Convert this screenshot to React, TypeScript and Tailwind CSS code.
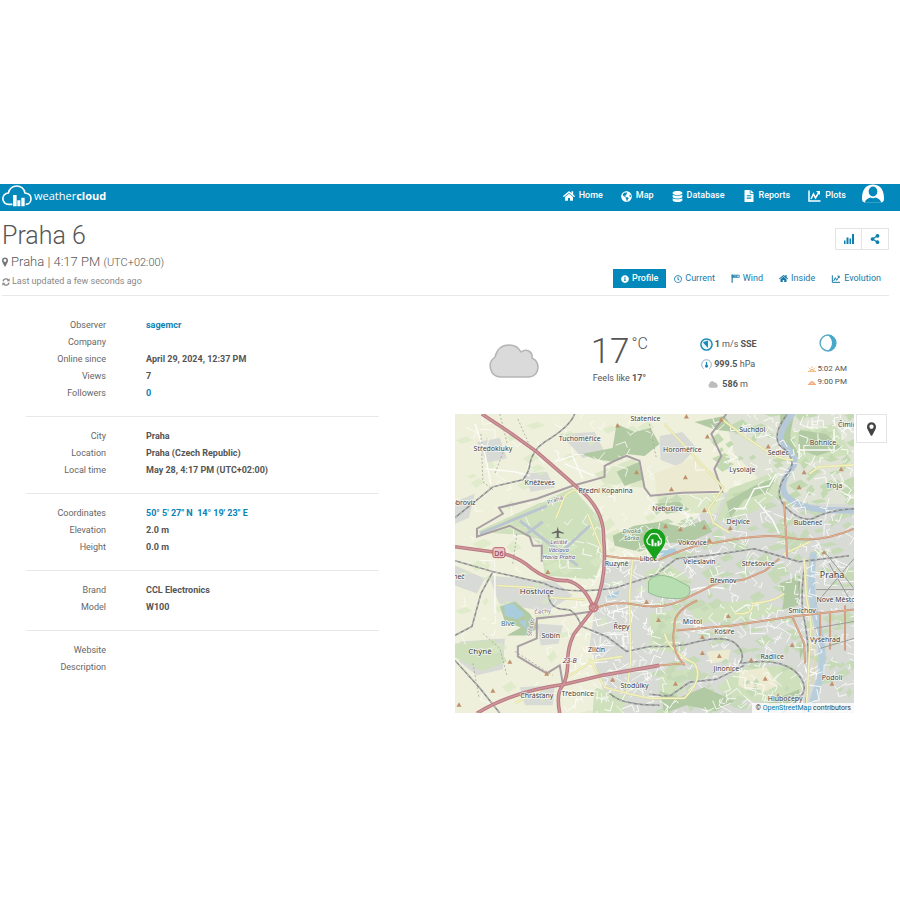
import type { ReactNode } from "react";
import {
  FaDatabase,
  FaFileAlt,
  FaGlobeAmericas,
  FaHome,
  FaInfoCircle,
  FaRegClock,
  FaShareAlt,
} from "react-icons/fa";

interface Row {
  label: string;
  value?: string;
  link?: boolean;
}

const sections: Row[][] = [
  [
    { label: "Observer", value: "sagemcr", link: true },
    { label: "Company" },
    { label: "Online since", value: "April 29, 2024, 12:37 PM" },
    { label: "Views", value: "7" },
    { label: "Followers", value: "0", link: true },
  ],
  [
    { label: "City", value: "Praha" },
    { label: "Location", value: "Praha (Czech Republic)" },
    { label: "Local time", value: "May 28, 4:17 PM (UTC+02:00)" },
  ],
  [
    { label: "Coordinates", value: "50° 5' 27\" N \u00a014° 19' 23\" E", link: true },
    { label: "Elevation", value: "2.0 m" },
    { label: "Height", value: "0.0 m" },
  ],
  [
    { label: "Brand", value: "CCL Electronics" },
    { label: "Model", value: "W100" },
  ],
  [{ label: "Website" }, { label: "Description" }],
];

function PlotIcon({ className }: { className: string }) {
  return (
    <svg viewBox="0 0 26 24" className={className} fill="none" stroke="currentColor" strokeWidth="3">
      <path d="M2 1v21h23" />
      <path d="M6 18l5-10 4 8 6-10" />
      <path d="M16 2h8v8z" fill="currentColor" stroke="none" />
    </svg>
  );
}

function WindIcon({ className }: { className: string }) {
  return (
    <svg viewBox="0 0 24 24" className={className} fill="none" stroke="currentColor">
      <path d="M3 1v22" strokeWidth="3" />
      <path d="M3 3h19v6H3zM10 3v6M16 3v6" strokeWidth="2" />
      <path d="M5 4h4v4H5zM12 4h3v4h-3z" fill="currentColor" stroke="none" />
    </svg>
  );
}

function BarsIcon() {
  return (
    <svg viewBox="0 0 20 20" className="size-[10px]" fill="currentColor">
      <path d="M0 13h3v7H0zM5 7h4v13H5zM11 9h3v11h-3zM16 0h4v20h-4z" />
    </svg>
  );
}

function PinIcon({ className }: { className: string }) {
  return (
    <svg viewBox="0 0 16 24" className={className} fill="currentColor">
      <path
        fillRule="evenodd"
        d="M8 0a8 8 0 0 0-8 8c0 2 .4 3 1 4.500l5.500 10.500a1.700 1.700 0 0 0 3 0L15 12.500c.6-1.500 1-2.500 1-4.500a8 8 0 0 0-8-8zm0 4.200a3.800 3.800 0 1 1 0 7.600 3.800 3.800 0 0 1 0-7.600z"
      />
    </svg>
  );
}

function RefreshIcon() {
  return (
    <svg viewBox="0 0 24 24" className="size-2" fill="none" stroke="currentColor" strokeWidth="4">
      <path d="M3 10a9 9 0 0 1 16-4M21 14a9 9 0 0 1-16 4" />
      <path d="M23 1v9h-9zM1 23v-9h9z" fill="currentColor" stroke="none" />
    </svg>
  );
}

function CloudLogo() {
  return (
    <svg viewBox="0 0 90 66" className="h-[22px] w-[30px]" fill="none">
      <path
        d="M31 58H20A17 17 0 0 1 19 24C23 10 32 3 44 3c13 0 22 8 25 21 11 1 18 8 18 17 0 10-7 17-16 17"
        stroke="white"
        strokeWidth="5"
      />
      <path d="M33 30h11v34H33zM46 46h9v18h-9zM58 38h10v26H58z" fill="white" />
    </svg>
  );
}

const navItems: { label: string; icon: ReactNode }[] = [
  { label: "Home", icon: <FaHome className="size-3" /> },
  { label: "Map", icon: <FaGlobeAmericas className="size-[11px]" /> },
  { label: "Database", icon: <FaDatabase className="size-[11px]" /> },
  { label: "Reports", icon: <FaFileAlt className="size-3" /> },
  { label: "Plots", icon: <PlotIcon className="h-3 w-[13px]" /> },
];

function Header() {
  return (
    <header className="flex h-[27px] items-start justify-between bg-[#0288bb] pl-[2px] pr-4 text-white">
      <a href="#" className="flex items-center gap-[2px] pt-[1px]">
        <CloudLogo />
        <span className="font-['Open_Sans',sans-serif] text-[11px] leading-[22px]">
          weather<b>cloud</b>
        </span>
      </a>
      <div className="flex items-start gap-4">
        <nav className="flex items-start gap-[18px]">
          {navItems.map((item) => (
            <a key={item.label} href="#" className="flex h-6 items-center gap-1 text-[9px] font-medium">
              {item.icon}
              {item.label}
            </a>
          ))}
        </nav>
        <a href="#" aria-label="Account">
          <svg viewBox="0 0 66 56" className="h-[19px] w-[22px]">
            <path d="M2 52C-1 46 0 38 1 31C4 12 16 1 33 1s29 11 32 30c1 7 2 15-1 21L57 56H9z" fill="white" />
            <ellipse cx="33" cy="22" rx="13" ry="15" fill="#0288bb" />
            <path d="M8 56C10 47 18 42 25 40Q33 45 41 40C48 42 56 47 58 56z" fill="#0288bb" />
          </svg>
        </a>
      </div>
    </header>
  );
}

const tabs: { label: string; icon: ReactNode }[] = [
  { label: "Profile", icon: <FaInfoCircle className="size-2" /> },
  { label: "Current", icon: <FaRegClock className="size-2" /> },
  { label: "Wind", icon: <WindIcon className="size-[9px]" /> },
  { label: "Inside", icon: <FaHome className="size-[9px]" /> },
  { label: "Evolution", icon: <PlotIcon className="h-2 w-[10px]" /> },
];

function StationBar() {
  return (
    <div className="ml-[2px] mr-[11px] flex justify-between border-b border-[#e8e8e8] pb-[3px] pt-[9px]">
      <div>
        <h1 className="text-[25px] font-light leading-8 text-[#555]">Praha 6</h1>
        <p className="flex h-5 items-center gap-[3px] text-[13px] font-light text-[#555]">
          <PinIcon className="h-[10px] w-[6px] text-[#777]" />
          <span>
            Praha | 4:17 PM <span className="text-[11px]">(UTC+02:00)</span>
          </span>
        </p>
        <p className="flex h-5 items-center gap-[2px] text-[9px] text-[#888]">
          <RefreshIcon />
          Last updated a few seconds ago
        </p>
      </div>
      <div className="flex flex-col items-end justify-between pb-1 pt-2">
        <div className="flex border border-[#e4e4e4] text-[#0b7fb0]">
          <button aria-label="Statistics" className="flex h-[20px] w-[26px] items-center justify-center border-r border-[#e4e4e4]">
            <BarsIcon />
          </button>
          <button aria-label="Share" className="flex h-[20px] w-[26px] items-center justify-center">
            <FaShareAlt className="size-[10px]" />
          </button>
        </div>
        <nav className="flex">
          {tabs.map((tab, i) => (
            <a
              key={tab.label}
              href="#"
              className={
                "flex h-[19px] items-center gap-[3px] px-2 text-[9px] " +
                (i === 0 ? "bg-[#0288bb] font-medium text-white" : "text-[#1679a8]")
              }
            >
              {tab.icon}
              {tab.label}
            </a>
          ))}
        </nav>
      </div>
    </div>
  );
}

function Details() {
  return (
    <div className="pt-[10px] text-[9px] leading-[17px]">
      {sections.map((rows, i) => (
        <dl key={i} className={i > 0 ? "border-t border-[#e8e8e8] pb-[14px] pt-[11px]" : "pb-[14px] pt-[11px]"}>
          {rows.map((row) => (
            <div key={row.label} className="flex gap-10">
              <dt className="w-20 text-right text-[#666]">{row.label}</dt>
              <dd className="font-bold text-[#555]">
                {row.link ? (
                  <a href="#" className="text-[#0b82b5]">
                    {row.value}
                  </a>
                ) : (
                  row.value
                )}
              </dd>
            </div>
          ))}
        </dl>
      ))}
    </div>
  );
}

const cloudPath = "M12 33A11 11 0 0 1 7 13C9 5 14 1 21 1c6 0 10 3 12 7 6-4 12 0 11 6 4 2 6 5 6 9 0 6-4 10-10 10z";

function Conditions() {
  return (
    <div className="flex h-[118px] justify-between pl-[33px] pr-[40px] pt-[38px] text-[#555]">
      <svg viewBox="0 0 51 34" className="mt-[10px] h-[34px] w-[51px]">
        <path d={cloudPath} fill="#dadada" stroke="#b5b5b5" strokeWidth="1.500" />
      </svg>
      <div className="text-center">
        <div className="flex items-start justify-center gap-[2px] font-light">
          <span className="text-[35px] leading-9">17</span>
          <span className="text-[16px] leading-5">°C</span>
        </div>
        <p className="text-[9px] leading-4">
          Feels like <b>17°</b>
        </p>
      </div>
      <div className="flex flex-col items-center text-[9px] leading-5">
        <p className="flex items-center gap-[2px]">
          <svg viewBox="0 0 36 36" className="size-[13px]">
            <circle cx="18" cy="18" r="15.500" fill="#eaf6fb" stroke="#1688b5" strokeWidth="4" />
            <path d="M8 12L22 7V28z" fill="#1688b5" />
          </svg>
          <span>
            <b>1</b> m/s <b>SSE</b>
          </span>
        </p>
        <p className="flex items-center gap-[2px]">
          <svg viewBox="0 0 34 34" className="size-[11px]" fill="none">
            <path d="M9 30A15 15 0 1 1 25 30" stroke="#8ba8c4" strokeWidth="3" />
            <path d="M17 9v10" stroke="#1688b5" strokeWidth="4" />
            <circle cx="17" cy="22" r="5" fill="#1688b5" />
          </svg>
          <span>
            <b>999.5</b> hPa
          </span>
        </p>
        <p className="flex items-center gap-1">
          <svg viewBox="0 0 51 34" className="h-[7px] w-[10px]">
            <path d={cloudPath} fill="#bcbcbc" />
          </svg>
          <span>
            <b>586</b> m
          </span>
        </p>
      </div>
      <div className="flex flex-col items-center text-[8px] leading-[13px]">
        <svg viewBox="0 0 50 50" className="mb-[10px] size-[18px]">
          <circle cx="25" cy="25" r="22" fill="white" stroke="#5aa9c6" strokeWidth="4" />
          <path d="M24 2a23 23 0 0 1 0 46c9-8 12-16 12-23S33 10 24 2z" fill="#45a9ce" />
        </svg>
        <p className="flex items-center gap-[1px]">
          <svg viewBox="0 0 24 18" className="h-[6px] w-2" fill="#fbe3c5" stroke="#f5b673" strokeWidth="3">
            <path d="M0 16h24M6 16a6 6 0 0 1 12 0M12 1v5M3 5l4 4M21 5l-4 4" />
          </svg>
          5:02 AM
        </p>
        <p className="flex items-center gap-[1px]">
          <svg viewBox="0 0 24 18" className="h-[6px] w-2" fill="#fbd9c0" stroke="#f0975c" strokeWidth="3">
            <path d="M0 16h24M5 15a7 7 0 0 1 14 0" />
          </svg>
          9:00 PM
        </p>
      </div>
    </div>
  );
}

// [name, x, y, font size] in map units, text centred on x
const places: [string, number, number, number][] = [
  ["Statenice", 191, 7, 7],
  ["Středokluky", 38, 37, 7],
  ["Tuchoměřice", 125, 27, 7],
  ["Kněževes", 85, 71, 7],
  ["Přední Kopanina", 151, 79, 7],
  ["Dobrovíz", 6, 91, 7],
  ["Nebušice", 213, 97, 7],
  ["Horoměřice", 228, 38, 7],
  ["Suchdol", 298, 18, 7],
  ["Čimice", 395, 13, 7],
  ["Bohnice", 369, 31, 7],
  ["Sedlec", 324, 41, 7],
  ["Lysolaje", 288, 58, 7],
  ["Troja", 380, 74, 7],
  ["Dejvice", 284, 110, 7],
  ["Bubeneč", 354, 111, 7],
  ["Vokovice", 238, 131, 7],
  ["Veleslavín", 245, 150, 7],
  ["Střešovice", 304, 152, 7],
  ["Ruzyně", 162, 152, 7],
  ["Liboc", 194, 147, 7],
  ["Jeneč", 1, 165, 7],
  ["Hostivice", 82, 180, 8],
  ["Břevnov", 269, 169, 7],
  ["Praha", 378, 164, 9],
  ["Nové Město", 382, 188, 7],
  ["Smíchov", 348, 199, 7],
  ["Motol", 238, 211, 7],
  ["Košíře", 270, 221, 7],
  ["Řepy", 167, 216, 7],
  ["Sobín", 96, 225, 7],
  ["Chýně", 25, 241, 8],
  ["Zličín", 142, 239, 7],
  ["Vyšehrad", 371, 229, 7],
  ["Radlice", 318, 246, 7],
  ["Jinonice", 272, 258, 7],
  ["Podolí", 378, 267, 7],
  ["Stodůlky", 180, 275, 7],
  ["Chrášťany", 82, 285, 7],
  ["Třebonice", 123, 283, 7],
  ["Hlubočepy", 331, 288, 7],
];

const peaks = [
  [163, 11], [232, 2], [267, 5], [253, 22], [231, 63], [217, 75], [182, 58],
  [314, 32], [350, 58], [387, 55], [345, 73], [250, 96], [211, 112], [226, 115], [250, 113],
  [255, 126], [276, 114], [370, 138], [204, 206], [93, 158], [192, 188], [248, 223],
  [274, 202], [248, 239], [265, 242], [297, 246], [338, 231], [311, 265], [55, 248],
  [92, 260], [38, 277], [4, 291], [158, 266], [221, 270], [378, 270], [324, 282],
];

// Small deterministic generator so the street texture is stable between renders
function makeRandom(seed: number) {
  let s = seed;
  return () => {
    s = (s * 16807) % 2147483647;
    return s / 2147483647;
  };
}

function scatterStreets(seed: number, count: number, x: number, y: number, w: number, h: number) {
  const rnd = makeRandom(seed);
  let d = "";
  for (let i = 0; i < count; i++) {
    const px = x + rnd() * w;
    const py = y + rnd() * h;
    const a = rnd() * 6.3;
    const len = 5 + rnd() * 12;
    const dx = Math.cos(a) * len;
    const dy = Math.sin(a) * len * 0.7;
    d += `M${px.toFixed(1)} ${py.toFixed(1)}l${dx.toFixed(1)} ${dy.toFixed(1)}l${(-dy * 0.6).toFixed(1)} ${(dx * 0.6).toFixed(1)}`;
  }
  return d;
}

function scatterParks(seed: number, count: number, x: number, y: number, w: number, h: number) {
  const rnd = makeRandom(seed);
  let d = "";
  for (let i = 0; i < count; i++) {
    const px = x + rnd() * w;
    const py = y + rnd() * h;
    const a = 3 + rnd() * 10;
    const b = 2 + rnd() * 5;
    d += `M${px.toFixed(1)} ${py.toFixed(1)}l${a.toFixed(1)} ${(-b).toFixed(1)}l${(a * 0.6).toFixed(1)} ${b.toFixed(1)}l${(-a).toFixed(1)} ${b.toFixed(1)}z`;
  }
  return d;
}

const cityStreets = scatterStreets(17, 330, 190, 80, 210, 220);
const northStreets = scatterStreets(43, 70, 255, 0, 145, 85);
const suburbStreets = scatterStreets(91, 100, 120, 140, 80, 160);
const countryRoads = scatterStreets(7, 110, 0, 0, 200, 300);
const parks = scatterParks(29, 190, 195, 85, 200, 215);
const northParks = scatterParks(63, 55, 255, 0, 140, 90);
const westParks = scatterParks(5, 70, 0, 0, 200, 300);

const motorways =
  "M27 0L57 20L82 38Q105 58 122 73Q150 95 149 125Q153 165 139 195L119 221Q112 236 113 252Q112 266 108 272Q101 280 105 300" +
  "M0 133L44 139Q62 142 77 155Q94 168 112 167Q130 171 139 195M22 300Q58 278 110 271L148 262L205 252";

const mainRoads =
  "M150 142L165 144L205 146Q240 130 260 129Q310 119 335 124Q366 130 400 115" +
  "M139 195Q160 187 180 191Q210 197 233 184L262 170L290 166L311 157L325 145" +
  "M205 252L230 250M222 217L278 212L338 203L400 196M243 187Q218 198 220 214Q215 235 230 252M330 88L333 144M366 198v28M376 198v38M391 192v45M338 203L350 230L351 250";

const secondaryRoads =
  "M267 5Q292 24 312 37Q325 46 339 46M210 10L269 74L254 95L259 109L275 119M122 76Q110 78 107 90L101 105M133 100L150 143" +
  "M355 60L365 53L400 51M95 184L130 186M178 145L175 180L176 250L172 280L195 285L230 285Q250 265 240 250Q215 238 210 220" +
  "M280 200Q300 202 298 190Q320 188 330 180M350 145L352 182L357 210L352 300M135 245L150 274L172 280M110 265L140 247L168 243M42 172L80 174M60 290L88 276M356 128L330 140";

const railways =
  "M0 104L38 73L68 66Q75 57 75 50Q78 36 90 28Q115 13 120 0M0 147L38 158L90 170Q110 182 162 174L205 160" +
  "M38 158L26 180L17 213L0 222M0 247L25 275L45 300M94 177Q92 196 112 196Q120 196 127 213L152 223L172 238L195 233L215 233L232 231Q270 220 281 230Q292 240 286 250Q322 244 340 257Q358 274 344 286L328 300" +
  "M195 281L215 283L235 269L262 266L290 252M333 0Q318 20 325 31Q344 45 335 58Q318 76 330 92Q345 108 358 105Q375 96 400 95M205 158L222 145L260 141L300 135L345 148L395 142M155 280Q166 292 205 292M350 155Q346 188 350 205Q357 240 353 280L350 300";

const boundaries =
  "M87 148V132H78L75 123L55 112L22 123V115L48 100L44 94L82 85L118 72L150 63L150 52L160 47L172 42L185 47L190 74L196 82L228 79L268 78L260 55L267 42L257 20L272 0" +
  "M137 198L110 202L82 205L82 225L63 233V243L78 252L92 260L105 252L108 270";

function StationMap() {
  return (
    <div className="relative min-w-0 flex-1">
      <svg viewBox="0 0 400 300" className="block w-full" role="img" aria-label="Station location map">
        <rect width="400" height="300" fill="#eff0db" />
        {/* built-up areas */}
        <g fill="#d8dad6">
          <path d="M195 146L268 80L325 60L400 85V300H170L150 282L135 232L140 196L152 150z" />
          <path d="M270 0H400V90H325L300 60L280 40z" fill="#dfe3d5" />
          <path d="M22 28L45 24L52 44L32 49zM105 20L140 18L150 38L128 44zM68 60L92 58L100 74L76 78z" />
          <path d="M205 22L228 18L242 34L224 53L206 46z" />
          <path d="M34 162L100 168L118 182L92 198L44 190zM82 210L108 212L104 230L86 232zM5 228L50 225L48 256L22 262L4 248z" />
          <path d="M0 88L20 80L14 104L0 110zM0 152L30 165L22 180L0 172zM65 274L100 272L98 292L70 292zM85 100L120 86L135 108L100 125z" />
        </g>
        {/* grass and fields */}
        <g fill="#cfe0bd">
          <path d="M22 118L118 74L145 105L148 145L140 166L90 162L86 132L75 122z" />
          <path d="M140 60L180 44L190 74L150 70zM202 82L270 80L262 100L205 98z" fill="#dbe7c6" />
          <path d="M275 75L322 58L326 80L300 98L262 108zM330 18L380 10L398 40L345 50z" />
          <path d="M285 255L338 252L350 275L330 292L278 285L262 275zM190 158L215 150L238 168L224 182L192 176z" />
          <path d="M195 200L225 196L222 240L196 235zM236 192L300 186L330 196L300 206L240 210zM205 258L235 256L228 280L205 282z" />
          <path d="M140 274L172 284L168 300H138zM0 230L40 226L52 248L28 258L0 244z" />
        </g>
        <g fill="#ecebd2">
          <path d="M285 258L312 254L324 272L302 282L284 272zM252 238L276 236L274 247L256 250zM200 60L240 44L262 60L264 76L202 80z" />
        </g>
        <path d={westParks} fill="#d8e8c4" opacity="0.7" />
        <path d={parks} fill="#c6dab8" />
        <path d={northParks} fill="#c3d9b2" />
        {/* forests */}
        <g fill="#b2caa3">
          <path d="M127 40L158 34L162 10L180 18L196 14L205 30L190 42L172 40L160 48L140 45z" />
          <path d="M162 58L184 48L188 66L170 72z" />
          <path d="M158 122L180 112L205 108L230 114L250 106L258 118L236 128L205 130L185 138L160 132z" />
          <path d="M272 88L300 72L322 64L314 78L290 86L276 104zM326 0L340 0L336 22L346 44L336 40L326 24z" />
          <path d="M345 16L372 20L388 34L362 42L344 34zM240 8L270 2L282 18L262 16zM200 90L225 88L235 96L212 100z" />
          <path d="M45 193L60 188L75 200L84 214L72 222L52 222L66 214L50 208z" />
          <path d="M325 170L346 162L344 192L328 196L330 184zM205 278L225 284L250 274L280 288L262 298L232 292L210 300z" />
          <path d="M312 290L345 276L346 284L322 298z" />
          <path d="M195 166L200 160L205 180L197 178zM345 230L350 236L346 246z" />
        </g>
        {/* water */}
        <g fill="none" stroke="#b5c9d8" strokeLinecap="round">
          <path d="M338 0Q322 22 328 30Q346 44 338 54Q322 72 334 84Q345 94 368 96L400 97" strokeWidth="6" />
          <path d="M359 142Q355 175 361 200Q372 240 366 265L355 300" strokeWidth="7" stroke="#b9cedb" />
          <path d="M354 145Q350 180 356 208Q364 240 358 270" strokeWidth="2" stroke="#ddd9b4" />
        </g>
        <path d="M49 192L58 190L70 201L62 206L50 202zM64 208L71 206L72 216zM205 138L220 134L224 140L208 143zM150 184L165 177L162 184z" fill="#a9cddd" />
        {/* streets */}
        <g fill="none" stroke="#fbfbf8">
          <path d={cityStreets} strokeWidth="1" opacity="0.9" />
          <path d={northStreets} strokeWidth="1" />
          <path d={suburbStreets} strokeWidth="1" />
          <path d={countryRoads} strokeWidth="1" opacity="0.8" />
          <path
            d="M290 95L300 75L315 72L322 60M290 95L280 95M345 36H380V15M345 45L345 30M305 90L318 106L325 120M100 48L118 42L128 65M30 55L60 58L75 62M20 10L30 40L36 70M110 50L140 62M225 180Q250 170 270 175M40 160V200"
            strokeWidth="1.500"
          />
        </g>
        <path d="M194 168Q200 158 218 164L235 173Q238 184 226 185Q206 186 194 179z" fill="#b7deb0" stroke="#93bd90" strokeWidth="1" />
        <path
          d="M26 20L28 68L38 76M45 0L52 28L40 60M63 5L74 30M28 220L45 235L52 262M60 238L98 262M58 150L62 120M18 250L24 284M195 10L202 45"
          fill="none"
          stroke="#a5a59a"
          strokeWidth="0.800"
          strokeDasharray="2 2"
        />
        <path d="M25 120L92 92M65 107L123 152M72 120L88 108M105 140L135 112" stroke="#bbc5cd" strokeWidth="3" fill="none" />
        <path d={boundaries} fill="none" stroke="#a79da3" strokeWidth="2" />
        <path d={railways} fill="none" stroke="#858788" strokeWidth="1.500" />
        <path d={railways} fill="none" stroke="#dcdcdc" strokeWidth="0.700" strokeDasharray="3 3" />
        <path d={secondaryRoads} fill="none" stroke="#cfcf9c" strokeWidth="2.200" />
        <path d={secondaryRoads} fill="none" stroke="#f4f2bd" strokeWidth="1.600" />
        <path d={mainRoads} fill="none" stroke="#c69174" strokeWidth="2" />
        <path d={mainRoads} fill="none" stroke="#e0b294" strokeWidth="1" />
        <path d={motorways} fill="none" stroke="#b87980" strokeWidth="3.600" />
        <path d={motorways} fill="none" stroke="#cf959b" strokeWidth="1.600" />
        <circle cx="139" cy="194" r="4" fill="none" stroke="#c77a80" strokeWidth="2" />
        <path d="M345 168v18M372 140L400 175M400 145L362 190M375 150L398 190M362 176H400M360 215L400 208M366 235L400 225" stroke="#9c9c98" fill="none" />
        <g fill="#c0906a">
          {peaks.map(([x, y]) => (
            <path key={`${x}-${y}`} d={`M${x} ${y - 2}l2.500 4.500h-5z`} />
          ))}
        </g>
        <rect x="38" y="134" width="12" height="10" rx="2" fill="#ecc5c8" stroke="#b7606b" />
        <path d="M103 113l1 4l5 2v1l-5-1v4l2 1h-6l2-1v-4l-5 1v-1l5-2z" fill="#666" />
        <g
          fontFamily="'Noto Sans', sans-serif"
          textAnchor="middle"
          stroke="#ffffff"
          strokeOpacity="0.7"
          strokeWidth="1.500"
          paintOrder="stroke"
          fill="#3d3d3d"
        >
          {places.map(([name, x, y, size]) => (
            <text key={name} x={x} y={y} fontSize={size}>
              {name}
            </text>
          ))}
          <text x="44" y="142" fontSize="7" fill="#803040" strokeWidth="0">D6</text>
          <text x="115" y="250" fontSize="7" fontStyle="italic" fill="#803040">23-B</text>
          <text x="53" y="213" fontSize="7" fill="#3f6f75">Blve</text>
          <g fontSize="6" fontStyle="italic" fill="#5f5c8c">
            <text x="104" y="130">Letiště</text>
            <text x="104" y="138">Václava</text>
            <text x="104" y="145">Havla Praha</text>
          </g>
          <g fontSize="6" fontStyle="italic" fill="#5b7a60">
            <text x="177" y="119">Divoká</text>
            <text x="177" y="126">Šárka</text>
          </g>
          <g fontSize="6" fill="#85778a">
            <text transform="translate(101 88) rotate(-20)">Praha</text>
            <text transform="translate(88 200) rotate(-5)">Čechy</text>
            <text transform="translate(78 214) rotate(-80)">Středo</text>
          </g>
        </g>
        {/* station marker */}
        <g transform="translate(200 115)">
          <path d="M0 32C-3 24-11 19-11 11A11 11 0 0 1 11 11C11 19 3 24 0 32z" fill="#18a21c" />
          <path d="M-4 16H-5A4 4 0 0 1-6 9Q-4 4 0 5Q4 5 5 9A4 4 0 0 1 5 16" fill="none" stroke="white" strokeWidth="1.300" />
          <path d="M-3 10.500h2v7h-2zM0 14h2v3.500h-2zM3 12h2v5.500h-2z" fill="white" />
        </g>
      </svg>
      <p className="absolute bottom-0 right-0 bg-white/80 px-[3px] text-[7px] leading-[10px] text-[#333]">
        © <a href="#" className="text-[#0078a8]">OpenStreetMap</a> contributors
      </p>
    </div>
  );
}

export default function App() {
  return (
    <div className="min-h-screen bg-white pt-46 font-[Roboto,sans-serif]">
      <Header />
      <StationBar />
      <main className="grid grid-cols-[353fr_432fr] gap-[76px] pl-[26px] pr-[13px]">
        <Details />
        <section>
          <Conditions />
          <div className="flex items-start gap-[2px]">
            <StationMap />
            <button
              aria-label="Center map on station"
              className="flex h-[29px] w-[31px] items-center justify-center border border-[#e4e4e4] text-[#444]"
            >
              <PinIcon className="h-[14px] w-[9px]" />
            </button>
          </div>
        </section>
      </main>
    </div>
  );
}
